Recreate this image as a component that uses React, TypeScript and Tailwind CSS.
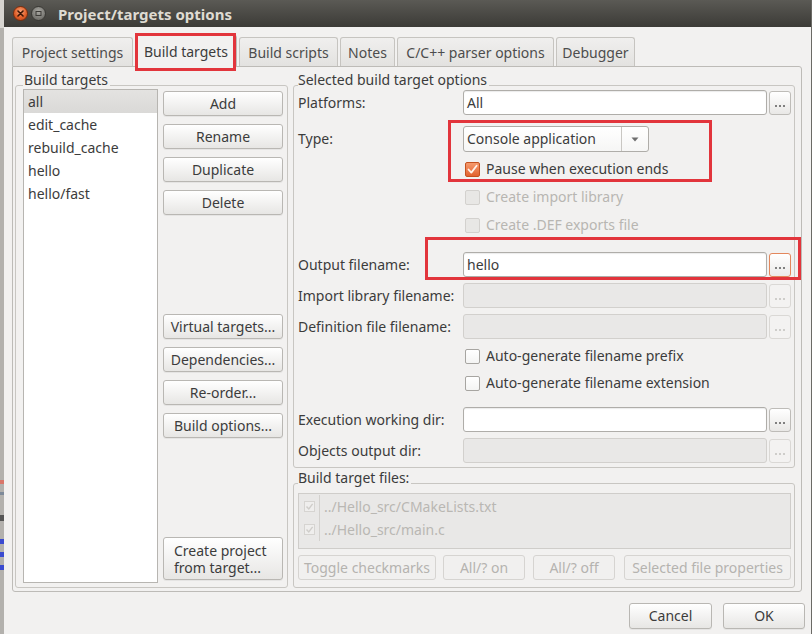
import React from "react";

type Kids = { children?: React.ReactNode; className?: string };

function Btn({ children, className = "", disabled = false }: Kids & { disabled?: boolean }) {
  return (
    <div
      className={
        "flex items-center justify-center rounded-[3px] border " +
        (disabled
          ? "border-[#d6d4d1] bg-[#f1f0ef] text-[#b5b3af]"
          : "border-[#b9b7b3] bg-gradient-to-b from-[#ffffff] to-[#e7e6e4] text-[#3c3c3c] shadow-[0_1px_0_rgba(0,0,0,0.05)]") +
        " " +
        className
      }
    >
      {children}
    </div>
  );
}

function Dots({ disabled = false, focus = false }: { disabled?: boolean; focus?: boolean }) {
  const dot = disabled ? "bg-[#c2c0bc]" : "bg-[#5a5a5a]";
  return (
    <div
      className={
        "flex h-[24px] w-[22px] items-end justify-center rounded-[3px] border pb-[7px] " +
        (focus
          ? "border-[#e3875c] bg-gradient-to-b from-[#ffffff] to-[#ecebe9]"
          : disabled
          ? "border-[#dad8d5] bg-[#f3f2f1]"
          : "border-[#bebcb8] bg-gradient-to-b from-[#ffffff] to-[#e9e8e6]")
      }
    >
      <div className="flex gap-[2px]">
        <div className={"h-[2px] w-[2px] rounded-full " + dot} />
        <div className={"h-[2px] w-[2px] rounded-full " + dot} />
        <div className={"h-[2px] w-[2px] rounded-full " + dot} />
      </div>
    </div>
  );
}

function Field({ value = "", disabled = false }: { value?: string; disabled?: boolean }) {
  return (
    <div
      className={
        "flex h-[25px] w-[304px] items-center rounded-[3px] border pl-[3px] " +
        (disabled
          ? "border-[#d2d0cd] bg-[#e9e8e7]"
          : "border-[#afada9] bg-white shadow-[inset_0_1px_1px_rgba(0,0,0,0.08)]")
      }
    >
      {value}
    </div>
  );
}

function Check({ state }: { state: "on" | "off" | "dis" }) {
  if (state === "on")
    return (
      <div className="flex h-[15px] w-[15px] items-center justify-center rounded-[2px] border border-[#c4511f] bg-gradient-to-b from-[#f59a6c] to-[#e2622e]">
        <svg width="11" height="11" viewBox="0 0 11 11">
          <path d="M1.5 5.5 L4.3 8.6 L9.6 1.8" fill="none" stroke="#fff3ec" strokeWidth="1.8" strokeLinecap="round" strokeLinejoin="round" />
        </svg>
      </div>
    );
  if (state === "dis")
    return <div className="h-[15px] w-[15px] rounded-[2px] border border-[#d3d1ce] bg-[#e8e7e5]" />;
  return <div className="h-[15px] w-[15px] rounded-[2px] border border-[#a7a5a1] bg-gradient-to-b from-white to-[#f4f4f3]" />;
}

function FieldRow({ label, value, disabled, focus, className = "" }: { label: string; value?: string; disabled?: boolean; focus?: boolean; className?: string }) {
  return (
    <div className={"flex h-[25px] items-center " + className}>
      <div className="w-[165px] shrink-0">{label}</div>
      <Field value={value} disabled={disabled} />
      <div className="ml-[2px]">
        <Dots disabled={disabled} focus={focus} />
      </div>
    </div>
  );
}

function CheckRow({ label, state, className = "" }: { label: string; state: "on" | "off" | "dis"; className?: string }) {
  return (
    <div className={"flex h-[20px] items-center pl-[167px] " + className}>
      <Check state={state} />
      <span className={"ml-[6px] " + (state === "dis" ? "text-[#b8b6b2]" : "")}>{label}</span>
    </div>
  );
}

function Tab({ label, w, selected = false }: { label: string; w: string; selected?: boolean }) {
  return (
    <div
      className={
        "flex items-center justify-center rounded-t-[3px] border border-b-0 " +
        w +
        (selected
          ? " relative z-10 -mb-px h-[32px] border-[#bdbbb7] bg-[#f2f1f0] text-[#3c3c3c]"
          : " h-[29px] border-[#c6c4c0] bg-gradient-to-b from-[#f0efee] to-[#e3e2e0] pt-[1px] text-[#4d4d4d]")
      }
    >
      {label}
    </div>
  );
}

export default function App() {
  const targets = ["all", "edit_cache", "rebuild_cache", "hello", "hello/fast"];
  return (
    <div className="relative flex h-[634px] w-[812px] overflow-hidden bg-[#f2f1f0] font-['Noto_Sans',sans-serif] text-[14px] leading-[20px] text-[#3c3c3c]">
      {/* desktop strip behind the dialog */}
      <div className="flex w-[4px] shrink-0 flex-col bg-[#b3b1ad]">
        <div className="h-[28px] bg-[#d6d4d0]" />
        <div className="mt-[452px] h-[4px] bg-[#d9776a]" />
        <div className="mt-[8px] h-[3px] bg-[#7e8a9a]" />
        <div className="mt-[20px] h-[6px] bg-[#555]" />
        <div className="mt-[18px] h-[5px] bg-[#3b4bd0]" />
        <div className="mt-[8px] h-[5px] bg-[#3b4bd0]" />
        <div className="mt-[8px] h-[5px] bg-[#3b4bd0]" />
      </div>

      <div className="flex min-w-0 flex-1 flex-col border-r border-[#6b6a66]">
        {/* title bar */}
        <div className="flex h-[27px] shrink-0 items-center bg-gradient-to-b from-[#5b5a55] to-[#3c3b37] pl-[9px]">
          <div className="flex h-[15px] w-[15px] items-center justify-center rounded-full border border-[#7a2d0e] bg-[radial-gradient(circle_at_50%_35%,#f7a47a,#e0602a_55%,#b8431a)]">
            <svg width="7" height="7" viewBox="0 0 7 7">
              <path d="M1 1 L6 6 M6 1 L1 6" stroke="#3d1606" strokeWidth="1.6" strokeLinecap="round" />
            </svg>
          </div>
          <div className="ml-[3px] flex h-[15px] w-[15px] items-center justify-center rounded-full border border-[#3a3935] bg-[radial-gradient(circle_at_50%_35%,#a9a8a3,#7c7b76_60%,#62615c)]">
            <svg width="7" height="7" viewBox="0 0 7 7">
              <rect x="1" y="1.5" width="5" height="4" fill="none" stroke="#3c3b37" strokeWidth="1" />
            </svg>
          </div>
          <div className="ml-[12px] text-[15px] font-bold text-[#dfdbd2]">Project/targets options</div>
        </div>

        {/* body */}
        <div className="flex flex-col pl-[8px]">
          <div className="mt-[8px] flex h-[31px] items-end gap-[2px]">
            <Tab label="Project settings" w="w-[121px]" />
            <Tab label="Build targets" w="w-[102px]" selected />
            <Tab label="Build scripts" w="w-[99px]" />
            <Tab label="Notes" w="w-[55px]" />
            <Tab label="C/C++ parser options" w="w-[157px]" />
            <Tab label="Debugger" w="w-[79px]" />
          </div>

          {/* tab pane */}
          <div className="flex w-[790px] rounded-[3px] rounded-tl-none border border-[#bdbbb7] pb-[3px] pl-[2px] pt-[8px]">
            {/* left group */}
            <fieldset className="h-[513px] w-[273px] rounded-[3px] border border-[#c8c6c2] pl-[7px] pr-[3px] pb-[3px]">
              <legend className="pb-[10px] pl-[1px] pr-[2px] leading-[10px]">Build targets</legend>
              <div className="-mt-[6px] flex h-[494px] gap-[5px]">
                <div className="w-[135px] border border-[#b7b5b1] bg-white">
                  {targets.map((t, i) => (
                    <div key={t} className={"flex h-[23px] items-center pl-[4px] " + (i === 0 ? "bg-gradient-to-b from-[#e4e3e1] to-[#dad9d7]" : "")}>
                      {t}
                    </div>
                  ))}
                </div>
                <div className="flex w-[120px] flex-col">
                  <div className="mt-[2px] flex flex-col gap-[8px]">
                    <Btn className="h-[25px]">Add</Btn>
                    <Btn className="h-[25px]">Rename</Btn>
                    <Btn className="h-[25px]">Duplicate</Btn>
                    <Btn className="h-[25px]">Delete</Btn>
                  </div>
                  <div className="mt-[99px] flex flex-col gap-[8px]">
                    <Btn className="h-[25px]">Virtual targets...</Btn>
                    <Btn className="h-[25px]">Dependencies...</Btn>
                    <Btn className="h-[25px]">Re-order...</Btn>
                    <Btn className="h-[25px]">Build options...</Btn>
                  </div>
                  <Btn className="mt-[99px] h-[43px] !justify-start pl-[10px] leading-[17px]">
                    <div>
                      <div>Create project</div>
                      <div>from target...</div>
                    </div>
                  </Btn>
                </div>
              </div>
            </fieldset>

            {/* right column */}
            <div className="ml-[5px] flex flex-col">
              <fieldset className="h-[393px] w-[502px] rounded-[3px] border border-[#c8c6c2] pl-[4px] pr-[3px]">
                <legend className="pb-[10px] pr-[2px] leading-[10px]">Selected build target options</legend>
                <div className="-mt-[6px] flex flex-col">
                  <FieldRow className="mt-[1px]" label="Platforms:" value="All" />
                  <div className="mt-[11px] flex h-[26px] items-center">
                    <div className="w-[165px] shrink-0">Type:</div>
                    <div className="flex h-[26px] w-[186px] items-center rounded-[3px] border border-[#afada9] bg-gradient-to-b from-white to-[#f6f6f5]">
                      <div className="flex-1 pl-[3px]">Console application</div>
                      <div className="flex h-full w-[27px] items-center justify-center border-l border-[#c9c7c3]">
                        <svg width="8" height="5" viewBox="0 0 8 5">
                          <path d="M0.5 0.5 L7.5 0.5 L4 4.5 Z" fill="#6e6e6e" />
                        </svg>
                      </div>
                    </div>
                  </div>
                  <CheckRow className="mt-[7px]" label="Pause when execution ends" state="on" />
                  <CheckRow className="mt-[8px]" label="Create import library" state="dis" />
                  <CheckRow className="mt-[8px]" label="Create .DEF exports file" state="dis" />
                  <FieldRow className="mt-[17px]" label="Output filename:" value="hello" focus />
                  <FieldRow className="mt-[6px]" label="Import library filename:" disabled />
                  <FieldRow className="mt-[6px]" label="Definition file filename:" disabled />
                  <CheckRow className="mt-[7px]" label="Auto-generate filename prefix" state="off" />
                  <CheckRow className="mt-[7px]" label="Auto-generate filename extension" state="off" />
                  <FieldRow className="mt-[14px]" label="Execution working dir:" />
                  <FieldRow className="mt-[6px]" label="Objects output dir:" disabled />
                </div>
              </fieldset>

              <fieldset className="mt-[5px] w-[502px] rounded-[3px] border border-[#c8c6c2] pb-[7px] pl-[4px] pr-[3px]">
                <legend className="pb-[10px] pr-[2px] leading-[10px]">Build target files:</legend>
                <div className="h-[56px] w-[493px] border border-[#cfcdca] bg-[#e9e8e7] pt-[1px] text-[#b9b7b3]">
                  {["../Hello_src/CMakeLists.txt", "../Hello_src/main.c"].map((f) => (
                    <div key={f} className="flex h-[23px] items-center">
                      <div className="ml-[5px] flex h-[11px] w-[11px] items-center justify-center border border-[#d6d4d1] bg-[#efeeed]">
                        <svg width="9" height="9" viewBox="0 0 9 9">
                          <path d="M1.5 4.5 L3.8 7 L7.6 1.8" fill="none" stroke="#cfcdca" strokeWidth="1.4" />
                        </svg>
                      </div>
                      <div className="ml-[4px] h-[23px] w-px bg-[#d3d1ce]" />
                      <div className="ml-[4px]">{f}</div>
                    </div>
                  ))}
                </div>
                <div className="mt-[6px] flex h-[25px] items-center">
                  <Btn disabled className="h-[25px] w-[138px]">Toggle checkmarks</Btn>
                  <Btn disabled className="ml-[7px] h-[25px] w-[82px]">All/? on</Btn>
                  <Btn disabled className="ml-[8px] h-[25px] w-[82px]">All/? off</Btn>
                  <Btn disabled className="ml-[9px] h-[25px] w-[167px]">Selected file properties</Btn>
                </div>
              </fieldset>
            </div>
          </div>

          {/* dialog buttons */}
          <div className="mt-[11px] flex justify-end gap-[11px] pr-[6px]">
            <Btn className="h-[26px] w-[83px]">Cancel</Btn>
            <Btn className="h-[26px] w-[82px]">OK</Btn>
          </div>
        </div>
      </div>

      {/* red annotation boxes */}
      <div className="pointer-events-none absolute left-[135px] top-[33px] z-20 h-[38px] w-[101px] border-[3px] border-[#e2353c]" />
      <div className="pointer-events-none absolute left-[448px] top-[120px] z-20 h-[62px] w-[264px] border-[3px] border-[#e2353c]" />
      <div className="pointer-events-none absolute left-[425px] top-[237px] z-20 h-[43px] w-[376px] border-[3px] border-[#e2353c]" />
    </div>
  );
}
